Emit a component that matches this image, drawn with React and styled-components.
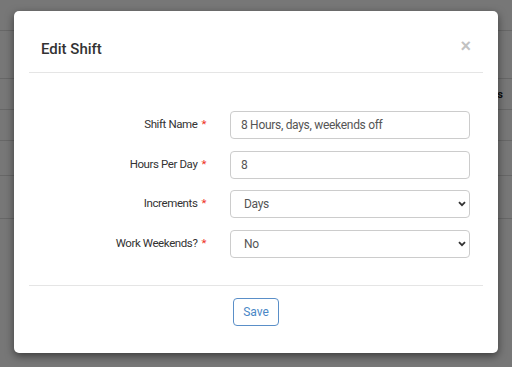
import React from "react";
import styled, { createGlobalStyle } from "styled-components";

const Global = createGlobalStyle`
  html, body { margin: 0; padding: 0; background: #fff; }
  body { font-family: Roboto, "Liberation Sans", Arial, sans-serif; width: 512px; height: 367px; overflow: hidden; }
  * { box-sizing: border-box; }
`;

const Page = styled.div`
  width: 512px;
  height: 367px;
  position: relative;
`;

const BgTable = styled.div`
  display: flex;
  flex-direction: column;
`;

const BgRow = styled.div`
  height: ${(p) => p.h}px;
  border-bottom: 1px solid #dcdcdc;
  display: flex;
  align-items: center;
  justify-content: flex-end;
  padding-right: 9px;
  font-size: 11px;
  font-weight: 700;
  color: #222;
`;

const Overlay = styled.div`
  position: absolute;
  inset: 0;
  background: rgba(0, 0, 0, 0.535);
`;

const Modal = styled.div`
  position: absolute;
  left: 14px;
  top: 11px;
  width: 484px;
  height: 342px;
  background: #fff;
  border-radius: 5px;
  box-shadow: 0 3px 9px rgba(0, 0, 0, 0.5);
  padding: 0 15px;
  display: flex;
  flex-direction: column;
`;

const Header = styled.div`
  position: relative;
  border-bottom: 1px solid #e5e5e5;
  padding: 26px 12px 11px;
`;

const Title = styled.h4`
  margin: 0;
  font-size: 15px;
  line-height: 24px;
  font-weight: 500;
  color: #333;
`;

const Close = styled.button`
  position: absolute;
  right: 12px;
  top: 26px;
  border: 0;
  background: none;
  padding: 0;
  font-size: 18px;
  line-height: 18px;
  font-weight: 700;
  color: #c2c2c2;
  font-family: "Liberation Sans", Arial, sans-serif;
`;

const Body = styled.div`
  flex: 1;
  display: grid;
  grid-template-columns: 177px 240px;
  column-gap: 24px;
  row-gap: 11.5px;
  align-content: start;
  padding-top: 38px;
`;

const Label = styled.label`
  text-align: right;
  align-self: center;
  font-size: 11.5px;
  letter-spacing: -0.4px;
  color: #333;
  padding-bottom: 2px;
`;

const Req = styled.span`
  color: #e32;
  margin-left: 4px;
`;

const Input = styled.input`
  height: 28px;
  width: 240px;
  border: 1px solid #ccc;
  border-radius: 4px;
  padding: 0 10px;
  font-family: Roboto, "Liberation Sans", Arial, sans-serif;
  font-size: 12px;
  letter-spacing: -0.3px;
  color: #555;
  outline: none;
`;

const SelectWrap = styled.div`
  position: relative;
  width: 240px;
  height: 28px;
`;

const Select = styled.select`
  appearance: none;
  width: 100%;
  height: 28px;
  border: 1px solid #ccc;
  border-radius: 4px;
  padding: 0 12px 0 13px;
  font-family: Roboto, "Liberation Sans", Arial, sans-serif;
  font-size: 12px;
  letter-spacing: -0.3px;
  color: #555;
  background: #fff;
  outline: none;
`;

const Chevron = styled.svg`
  position: absolute;
  right: 4px;
  top: 11px;
  pointer-events: none;
`;

const Footer = styled.div`
  border-top: 1px solid #e5e5e5;
  display: flex;
  justify-content: center;
  padding: 12px 0 27px;
`;

const SaveBtn = styled.button`
  width: 46px;
  height: 28px;
  border: 1px solid #5a8fc8;
  border-radius: 4px;
  background: #fff;
  color: #4a87c6;
  font-family: Roboto, "Liberation Sans", Arial, sans-serif;
  font-size: 12px;
  padding: 0;
`;

const ChevronIcon = () => (
  <Chevron width="8" height="6" viewBox="0 0 8 6">
    <path d="M1 1.2 L4 4.2 L7 1.2" fill="none" stroke="#333" strokeWidth="1.8" />
  </Chevron>
);

export default function App() {
  return (
    <Page>
      <Global />
      <BgTable>
        <BgRow h={31} />
        <BgRow h={48} />
        <BgRow h={31}>Actions</BgRow>
        <BgRow h={31} />
        <BgRow h={35} />
        <BgRow h={43} />
      </BgTable>
      <Overlay />
      <Modal>
        <Header>
          <Title>Edit Shift</Title>
          <Close>×</Close>
        </Header>
        <Body>
          <Label>
            Shift Name<Req>*</Req>
          </Label>
          <Input defaultValue="8 Hours, days, weekends off" />
          <Label>
            Hours Per Day<Req>*</Req>
          </Label>
          <Input defaultValue="8" />
          <Label>
            Increments<Req>*</Req>
          </Label>
          <SelectWrap>
            <Select defaultValue="Days">
              <option>Days</option>
              <option>Hours</option>
            </Select>
            <ChevronIcon />
          </SelectWrap>
          <Label>
            Work Weekends?<Req>*</Req>
          </Label>
          <SelectWrap>
            <Select defaultValue="No">
              <option>No</option>
              <option>Yes</option>
            </Select>
            <ChevronIcon />
          </SelectWrap>
        </Body>
        <Footer>
          <SaveBtn>Save</SaveBtn>
        </Footer>
      </Modal>
    </Page>
  );
}
